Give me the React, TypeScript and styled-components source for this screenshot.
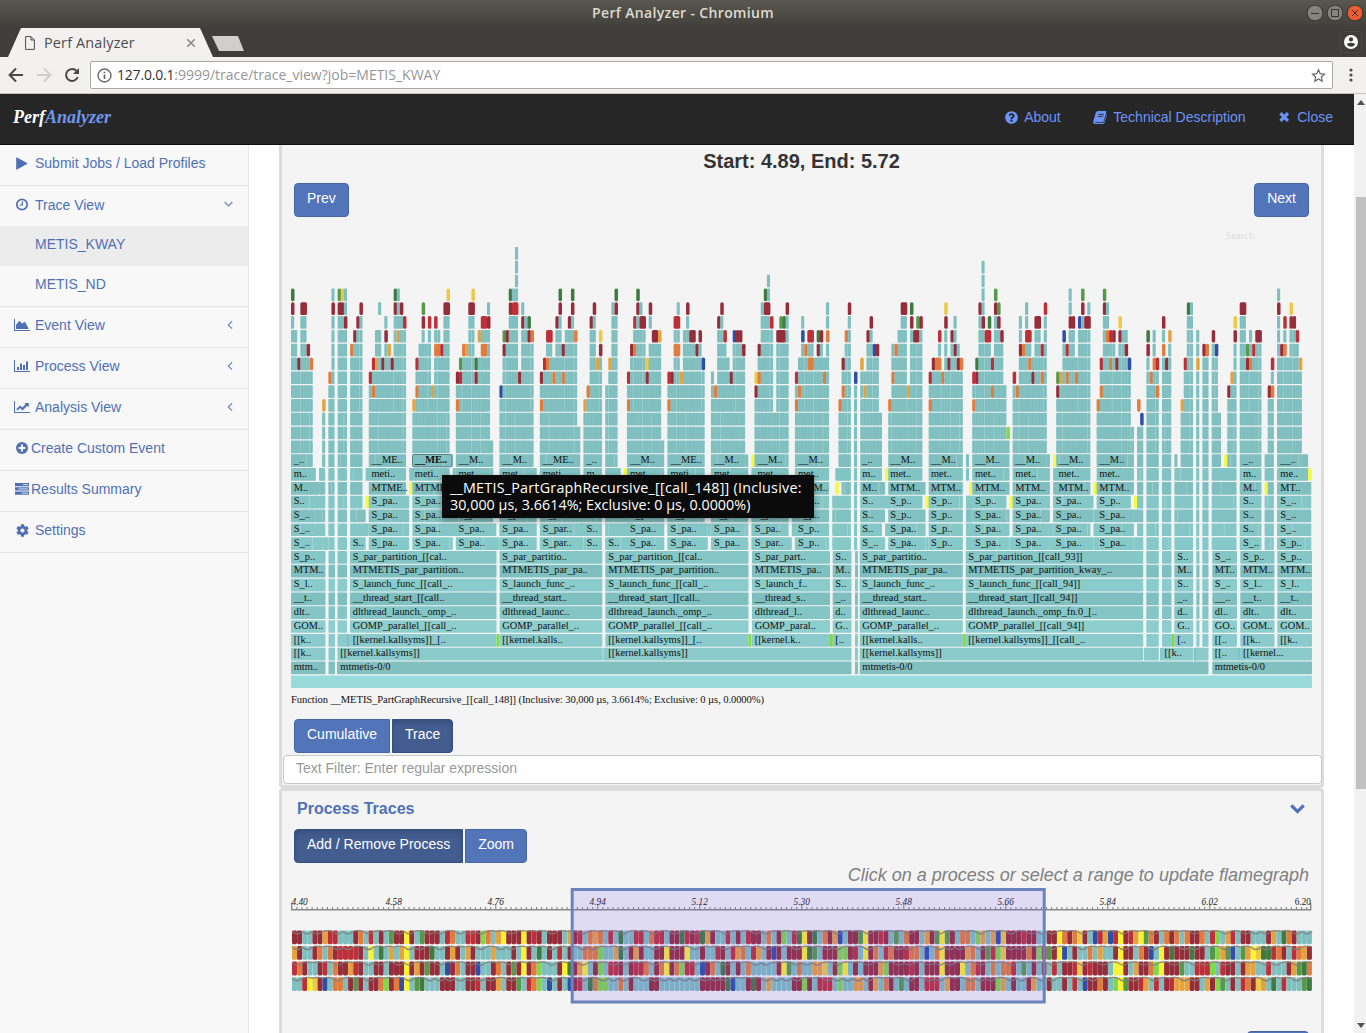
import React from "react";
import styled, { createGlobalStyle, css } from "styled-components";
import { FaQuestionCircle, FaCog } from "react-icons/fa";

const Global = createGlobalStyle`
  * { box-sizing: border-box; }
  html, body { margin: 0; padding: 0; background: #fff; overflow: hidden; }
  body { font: 14px/20px "Liberation Sans", Arial, sans-serif; color: #333; }
`;
const ui = `"Open Sans", "Noto Sans", sans-serif`;

const Window = styled.div`width: 1366px; height: 1033px; overflow: hidden; display: flex; flex-direction: column;`;
const TitleBar = styled.div`
  position: relative; height: 28px; flex: none; display: flex; align-items: center; justify-content: center;
  background: linear-gradient(#5a5750, #403f3a); color: #dfdbd2;
  font: 600 14px/26px ${ui}; letter-spacing: 0.35px; padding-bottom: 2px;
`;
const WindowButtons = styled.div`position: absolute; right: 3px; top: 5px; display: flex; gap: 4px;`;
const TabStrip = styled.div`
  height: 29px; flex: none; background: #3f3e3a; display: flex; justify-content: space-between;
`;
const Tab = styled.div`
  width: 205px; margin-left: 8px; height: 29px; background: #f2f1f0; display: flex; align-items: center; padding: 0 17px;
  clip-path: polygon(13px 0, 192px 0, 205px 100%, 0 100%); color: #4c4c4c; font: 14.4px/28px ${ui};
`;
const TabTitle = styled.span`flex: 1; margin-left: 9px; letter-spacing: 0.17px;`;
const NewTab = styled.div`width: 32px; height: 15px; margin-top: 8px; margin-left: -1px; background: #d0cfcd; clip-path: polygon(0 0, 26px 0, 32px 100%, 7px 100%);`;
const Tabs = styled.div`display: flex; gap: 0;`;
const Profile = styled.div`width: 22px; height: 22px; margin: 3px 4px; border: 1px solid #4a4843; border-radius: 3px; display: grid; place-items: center;`;
const Toolbar = styled.div`
  height: 37px; flex: none; background: #f2f1f0; border-bottom: 1px solid #c4c3c1; display: flex; align-items: center; padding-left: 7px;
`;
const NavIcons = styled.div`display: flex; gap: 10px; width: 83px;`;
const Address = styled.div`
  width: 1243px; height: 28px; border: 1px solid #a9a8a6; border-radius: 2px; background: #fff; display: flex; align-items: center;
  padding: 0 6px; font: 14px/26px ${ui}; color: #969696; b { font-weight: 400; color: #333; letter-spacing: -0.2px; }
`;
const Url = styled.span`flex: 1; margin-left: 5px; letter-spacing: 0;`;
const Dots = styled.div`width: 32px; display: grid; place-items: center; padding-left: 4px;`;

const Viewport = styled.div`flex: 1; display: flex; min-height: 0;`;
const Page = styled.div`width: 1354px; display: flex; flex-direction: column;`;
const Header = styled.header`
  height: 51px; flex: none; background: #262626; border-bottom: 1px solid #101010; display: flex; align-items: center;
  justify-content: space-between; padding: 0 21px 4px 13px; color: #6c93f8;
`;
const Brand = styled.div`font: italic bold 18px/24px "Liberation Serif", serif; color: #6f96ee; span { color: #fff; }`;
const TopLinks = styled.nav`display: flex; gap: 32.6px;`;
const TopLink = styled.a`display: flex; align-items: center; svg { margin-right: 6px; }`;

const Body = styled.div`flex: 1; display: flex; min-height: 0;`;
const Sidebar = styled.aside`width: 249px; background: #f8f8f8; border-right: 1px solid #e7e7e7; color: #5070b4;`;
const MenuItem = styled.div<{ $tight?: boolean; $open?: boolean }>`
  height: ${p => (p.$open ? 40 : 41)}px; border-bottom: ${p => (p.$open ? "0" : "1px solid #e4e4e4")}; display: flex; align-items: center;
  padding: 0 15px ${p => (p.$open ? 3 : 4)}px 14px;
  & > i { width: ${p => (p.$tight ? 17 : 21)}px; flex: none; display: flex; align-items: center; }
  & > span { flex: 1; }
`;
const SubItem = styled.div<{ $active?: boolean; $last?: boolean }>`
  height: ${p => (p.$last ? 41 : 40)}px; padding: 8px 0 0 35px; background: ${p => (p.$active ? "#ececec" : "transparent")};
  border-bottom: ${p => (p.$last ? "1px solid #e4e4e4" : "0")};
`;

const Content = styled.main`padding-left: 30px; width: 1075px; overflow: hidden;`;
const Panel = styled.section<{ $first?: boolean }>`
  background: #f4f4f4; border: 3px solid #dcdcdc; border-radius: ${p => (p.$first ? "0 0 4px 4px" : "4px")};
  ${p => p.$first && css`border-top: 0; height: 643px;`}
  ${p => !p.$first && css`height: 400px;`}
`;
const RangeTitle = styled.h2`margin: 0; height: 38px; padding-top: 4px; text-align: center; font: bold 20px/24px "Liberation Sans", sans-serif;`;
const Spread = styled.div`display: flex; justify-content: space-between; padding: 0 12px;`;
const Button = styled.button<{ $active?: boolean; $side?: "l" | "r" }>`
  height: 34px; min-width: 54px; padding: 0 12px 4px; border: 1px solid ${p => (p.$active ? "#34507f" : "#4766a5")}; color: #fff;
  background: ${p => (p.$active ? "#435d90" : "#5274b8")}; font: 14px/20px "Liberation Sans", Arial, sans-serif; white-space: nowrap;
  border-radius: ${p => (p.$side === "l" ? "4px 0 0 4px" : p.$side === "r" ? "0 4px 4px 0" : "4px")};
  box-shadow: ${p => (p.$active ? "inset 0 3px 5px rgba(0,0,0,.15)" : "none")};
`;
const WideButton = styled(Button)`width: 62px;`;
const ButtonGroup = styled.div`display: flex; gap: 2px; padding-left: 12px;`;
const ChartArea = styled.div`position: relative; height: 502px; padding-left: 9px; svg { display: block; }`;
const Tooltip = styled.div`
  position: absolute; left: 160px; top: 258px; width: 372px; height: 43px; padding: 4px 8px; background: #0b0b0b; color: #fff;
  font: 14.3px/17px ${ui}; white-space: nowrap; box-shadow: 0 2px 6px rgba(0,0,0,.4);
`;
const TipLine = styled.div<{ $spacing: number }>`letter-spacing: ${p => p.$spacing}px;`;
const Filter = styled.input`
  display: block; width: 1039px; height: 29px; margin: 2px 0 0 1px; border: 1px solid #c8c8c8; border-radius: 4px; padding: 0 12px 3px;
  font: 14px "Liberation Sans", Arial, sans-serif; background: #fff; &::placeholder { color: #999; }
`;
const PanelHead = styled.div`
  display: flex; justify-content: space-between; align-items: center; height: 38px; padding: 0 16px 2px 15px;
  font: bold 16px/20px "Liberation Sans", sans-serif; color: #5070b8;
`;
const Hint = styled.div`text-align: right; padding: 2px 12px 0 0; height: 24px; font: italic 18px/20px "Liberation Sans", sans-serif; color: #808080;`;
const TraceArea = styled.div`padding-left: 9px; height: 144px; svg { display: block; }`;
const Scrollbar = styled.div`width: 12px; background: #f1f1f1; display: flex; flex-direction: column; align-items: flex-end; justify-content: space-between;`;
const Thumb = styled.div`width: 10px; height: 592px; background: #c1c1c1; margin: 86px 0 229px;`;
const Arrow = styled.div<{ $up?: boolean }>`
  width: 0; height: 0; margin: ${p => (p.$up ? "6px 0 0" : "0 0 5px")}; margin-right: 1px; border: 4px solid transparent;
  ${p => (p.$up ? "border-bottom-color: #505050; border-top: 0; border-bottom-width: 5px;" : "border-top-color: #505050; border-bottom: 0; border-top-width: 5px;")}
`;

const colors: Record<string, string> = {
  t: "#7fbfbf", m: "#962d3a", r: "#bd3039", g: "#3f7a3f", L: "#57994a", y: "#ecca45", o: "#e07d3e", a: "#e5a340",
  b: "#314da6", n: "#80d84a", v: "#f6f93c",
};

/* Upper flame rows, one string per depth; each block holds a third of the chart, measured in thirds of a pixel. */
const upper: { origin: number; rows: string[] }[] = [
  { origin: 280, rows: [
    "t705-714", "t705-714", "t705-714",
    "g33 t155 L171 y182 t191 g341 t350 y499 y574 g687 t696-714 g836 g874 g1004",
    "m33 m61-80 m155 m173-191 t191 m238 t294 m341 t350 m359 L425 m490-508 m565-583 t621 m687 r696-714 t724 m836 m874 m939 t995 m1004",
    "t33 t61-80 t155 t173-191 m191 m229 t238 t313 t341-368 r368 m425 r443 r462 t490-508 t565-583 r602-621 m621 t687-714 m724 t733 g743 m827 t836 m864 t873 m930 t939 t995-1013",
    "t33-51 t61-80 t155 t173-200 m219 t229-247 t285-303 m313 t341 a350 t359-378 t425 t443 t462-480 t490-508 t565-583 a593 t602-630 L668 m677 t687-714 t724-743 m743 o752 r799-817 t827-845 t855-883 o883 t930-948 y958 t995-1013",
    "t33-51 t61-80 m80 t155 t173-200 o210 t219-247 t285-303 t313 a322 t341-378 t415-453 o462-480 r480 t490-508 o546 a555 t565-583 o602-621 t621 m668 t677-714 t724-761 t799-817 t827-845 m845 t855-892 t930-948 m958 t995-1013",
    "t33-51 m51 t61-89 o89 t155 t173-200 t210-247 r276 a285 t294 m303 t313-331 m331 t341-378 r406 t415-453 t462-508 L537 t546-583 g583 t593-630 t668-714 t724-761 r789 o799 t808-892 t930-948 a948 t958 a986 t995-1013",
    "t33-99 o146 t155 t173-200 t210-247 r266 t276-378 t406-453 t462-508 m528-537 r537-546 t546-583 m583 t593-630 t668-714 m714 t724-761 m780 t789-817 o817 t827-845 o845 t855-892 t930-967 t986-1013",
    "t33-99 t146-164 t173-200 t210-247 t266-276 o276 t285-378 o406 t415-453 a453 t462-508 t528-630 b659 t668-761 t780-892 o920 t930-967 t976-1013",
    "t33-99 a127 t146-164 t173-200 t210-247 t266-378 a397 t406-508 o528 t537-630 t659-761 o780 t789-892 a911 t920-967 t976-1013",
    "t33-99 t127 t146-164 t173-200 t210-247 t266-378 t397-508 t528-630 t659-761 t780-892 t911-967 t976-1013",
    "t33-99 t127 t146-164 t173-200 t210-247 t266-378 t397-508 t528-630 t659-761 t780-901 t911-967 t976-1013",
    "t33-99 t127 t146-164 t173-200 t210-247 t266-378 t397-508 t528-640 t659-761 t780-901 t911-967 t976-1013",
    "t33-99 t127 t146-164 t173-200 t210-247 t266-378 t397-516 t528-640 t659-761 t780-901 t911-967 t976-1013",
    "t33-108 t117-136 t146-164 t173-200 t210-247 t257-378 t388-509 t518-640 t659-770 t780-901 t911-967 t976-1022 v1032",
    "t33-115 t117-136 t146-164 t173-200 t210-247 t266-378 v388 t397-518 t528-640 t659-770 t780-901 t911-967 t976-1060",
    "t33-120 t120-136 t146-164 t173-200 t210-250 v257 t266-388 t397-518 t518-640 t659-775 t775-967 t976-1060",
    "t33-108 t108-136 t146-164 t173-200 t210-257 t266-388 t393-640 t659-770 t780-967 t976-1060",
    "t33-117 t117-136 t146-164 t173-200 t210-266 t266-388 t393-649 t659-770 t775-901 t905-967 t976-1060",
    "t33-122 t122-136 t146-164 t173-200 t210-257 t266-388 t397-518 t523-649 t659-775 t775-910 t910-967 t976-1060",
  ] },
  { origin: 620, rows: [
    "", "", "t443", "g50 g433 t443",
    "m50 t59 m87 t171 m199 m302 t424 m433-452 m498 t620 m685 m841-860 g869 y972",
    "r40 t50 m59-78 t87 r162-180 t199 m293 t302 t424-452 r452 L480 g489 t498 t545 t620 t685 m747 t841-860 m869 L888 m897 m972 t1000",
    "t40-78 m96-115 a115 t162-180 t190-208 m208-227 m236 t293-311 r311 b339 m348-357 m357-367 t424-461 m471-498 t498 b545 r564-582 g592 m601 o620 o676 t685 m738 t747 t832-860 t869 m878-897 t897 r953 t972 m990 t1000",
    "m31 o40 t49-78 t87-125 o162-180 t190-227 m227 t236 t293-320 t339-367 m367 m414 t424-461 t471-508 t545 o554 t564-582 m592 t601 t620 t676-694 t738-757 b757 m766 t813 o822 t832-860 t869-906 t953 t972 t990 m1000 t1009",
    "t31-78 y78 t87-125 t162-180 t190-246 b246 t293-330 t339-376 t414-461 t471-508 t536-564 o564-582 t582-629 m667 t676-694 a719 t738-775 t813-860 t869-906 m934 o943-962 t972 m981 t990-1009 m1009 o1018",
    "r22 t31-78 m78 t87-125 r144-153 m153-162 t162-180 a180 t190-255 t274 t293-330 m330 t339-376 y405 o415 t424-461 t471-508 r526 t536-610 o610 t620 t667-694 b705 t719-775 o813 t822-860 t869-906 r925 t934-962 o962 t972-1028",
    "t22-125 t144-255 t274 o283 t293-376 m405 t414-461 t471-508 t526 o536 t545-629 o667 t676-694 t705 t719 a729 t738-775 t813-860 a860 t869-906 t925-1028",
    "o22 t31-125 o144 t153-255 t274-376 t405-461 t471-508 o526 t536-629 o657 t667-694 t705 t719-775 o804 t813-906 o925 t934-1028",
    "t22-125 t144-255 t274-376 t405-508 t526-629 t657-694 t705 t719-785 t804-906 t925-1028",
    "t22-125 t144-255 t274-376 t405-508 t526-629 t657-694 t705 t719-785 t804-906 t925-1028",
    "t22-134 t144-255 t274-376 t405-508 t526-629 t657-694 t705 t719-785 t804-906 t925-1028",
    "t22-134 t144-255 t274-376 t376 v396 t405-508 t526-629 t657-694 t705 t719-785 t804-906 t925-1028 t1037",
    "t22-134 t144-255 t274-385 t396-508 t526-629 t647-694 t705 t719-785 v794 t804-906 t925-1028 t1037",
    "t22-134 t144-255 t274-385 t396-508 t526-629 v647 t663-694 t705 t719-791 t804-915 t925-1028",
    "t22-134 t144-255 t274-385 t396-508 t526-629 t638-694 t705 t719-906 v915 t925-1028 t1037-1060",
    "t22-134 t144-255 t274-385 t396-508 t517-629 t638-694 t705 t719-794 t804-915 t925-1028 t1037-1060",
    "t22-134 t144-265 t265-385 t396-508 t517-629 t638-694 t705 t719-785 t794-915 t925-1028 t1037-1060",
    "t22-134 t144-265 t274-385 t396-518 t527-629 t638-694 t705 t719-794 t804-915 t915-1028 t1037-1060",
  ] },
  { origin: 960, rows: [
    "", "t64", "t64", "t64 L101 t325 L363 L428 t952",
    "m54 t64 m101 L110 t194 r250 t325 m363 t381 m428 t437 g681 t690 m841-860 m952 y990",
    "t54 m64 g82 t101 m110 t175 t194 m222-241 t250 m325 m335 b353 t363 m372-391 t428-447 y474 m606 t681-699 y822 t841-860 t952 r971 m990 m999",
    "t54-73 r73-91 t101-119 m119 t175 r194-213 t222-241 t250 b307 t325-344 t353-391 t428 o437 r447 m456 m474 t484-502 g559 t578 t606 a625 t681-699 t709 m757 m822 t841-860 t869 m888-906 t952 t971 t990-1009 r1009",
    "t54-91 t101-129 m175 o185 t194-213 t222-241 r241 t250 t307 r316 t325-344 t353-391 t428-465 t474-493 m493 m559 t578 o606 t625 t681-699 t709 m727 o736 t757 b766 t822 t841-860 L860 t869 r878 t888-906 t952 m962 o971 t990-1018",
    "g45 t54-91 r91 t101-129 t175-204 o204 t213-260 t307-391 r418 t428-447 o447 t456 m465 t474-502 b502 t559 o578 r587 t606 m615 t625 r671 t681-699 a709 t727-745 t757-775 t822 t841-860 m860 o869 t878-906 r934 t952-1018 a1018",
    "r36 m45 t54-129 r157 t175-213 m213 t222-241 o241 t250 L288 a297 t307 o316 t325-344 o344 t353-391 t418-512 t559 o568 t578-596 t606-634 t671-699 t709 t727-745 t757-775 a813 t822 t841-906 t934 t952-1028",
    "t36-91 o91 t101-138 t157 o166 t175-260 m288 t297-391 o418 t428-512 t559-587 o587 t606-634 t671-699 t709 t727-745 t757-775 m804 t813-831 t841-906 m925 o934 t952-1028",
    "o36 t45-138 t157-260 t288-391 o409 t418-512 o531 t559-596 t606-634 a662 t671-699 t709 t727-745 t757-775 t804-831 t841-906 t925-943 t952-1028",
    "t36-138 t157-260 t288-391 t409-512 b540 t559-596 t606-634 t662-699 t709 t727-745 t757-785 t804-831 t841-906 t925-943 t952-1028",
    "t36-138 n138 t157-260 t288-391 t409-521 t531-549 t559-596 t606-634 t662-699 t709 t727-745 t757-785 t804-831 t841-906 t925-943 t952-1028",
    "t36-147 t157-260 t288-391 t409-521 t531-549 t559-596 t606-634 t662-699 t709 t727-745 t757-785 t804-831 t841-906 t925-943 t952-1028",
    "t36-147 t157-260 t260 v279 t288-391 t409-521 t531-549 t559-596 t606-634 t643 t662-699 t709 t727-745 t757-785 v794 t804-831 t841-906 t915-943 t952-1028 t1028-1046",
    "t36-147 t157-269 t279-391 t409-521 t531-549 t559-596 t606-634 t643-662 t662-699 t709 t727-745 t757-785 t785-831 t841-906 t915-943 t952-1046 v1046",
    "v26 t36-147 t157-269 t279-391 v400 t409-521 t531-549 t559-596 t606-634 t643-699 t709 t727-745 t757-831 t841-906 v915 t925-943 t952-1056",
    "t17-138 v147 t157-269 t279-400 t409-512 v521 t531-549 t559-596 t606-634 t643-699 t709 t727-745 t757-831 t841-906 t915-943 t952-1056",
    "t17-147 t157-269 t279-400 t400-521 t521-549 t559-596 t606-634 t643-699 t709 t727-745 t757-831 t841-910 t915-943 t952-1056",
    "t17-147 t157-265 t269-391 t400-521 t531-549 t559-596 t606-634 t643-699 t709 t727-745 t757-831 t841-910 t915-943 t952-1056",
    "t17-147 t147-265 t269-396 t400-549 t559-596 t606-634 t643-699 t709 t727-745 t757-831 t841-910 t915-943 t952-1056",
  ] },
];

/* Call-stack rows under the partition frames, in page pixels. */
const stack = "291-325.5 328.5-335 337.5-347 350-496.5 499.7-602.3 605.3-748.5 752-830 832.7-851.5 855-858 859.7-962.8 965.7-1143.2 1146.3-1158.8 1162-1171.5 1174.3-1193.2 1196.3-1199.5 1202.3-1208.5 1212.3-1237 1240.3-1274.5 1277.3-1312";
const lower: { fill: string; spans: string }[] = [
  { fill: "#85c7c7", spans: stack }, { fill: "#7fbfbf", spans: stack }, { fill: "#8acbcb", spans: stack },
  { fill: "#7fbfbf", spans: stack }, { fill: "#84c5c5", spans: stack }, { fill: "#8ccece", spans: stack },
  { fill: "#8bcbce", spans: stack.replace("337.5-347", "337.5-350") },
  { fill: "#8acacb", spans: "291-325.5 328.5-335 337.5-602.7 603.2-851.5 855-858 859.7-1143.2 1144-1158.8 1160-1193.5 1194-1208.5 1212.3-1238.2 1239-1312" },
  { fill: "#82bfbf", spans: "291-325.5 328.5-335 337-851.5 855-858 859.7-1208.5 1212.3-1312" },
  { fill: "#99dadb", spans: "291-1312" },
];
const rowFill = ["#7fbfbf", "#82c3c3", "#7fbfbf", "#85c7c7", "#82c1c1", "#85c7c7", "#86c9c9"];

const labels: Record<number, [number, string][]> = {
  15: [[293.7, "_.."], [371.5, "__ME.."], [414.8, "__ME.."], [458.5, "__M.."], [502.3, "__M.."], [542.7, "__ME.."], [586.5, "_.."], [630, "__M.."], [670.5, "__ME.."], [714, "__M.."], [757.5, "__M.."], [798, "__M.."], [862.3, "_.."], [890.3, "__M.."], [931, "__M.."], [975, "__M.."], [1015.3, "__M.."], [1058.5, "__M.."], [1099.3, "__M.."], [1243, "_.."], [1280.3, "__.."]],
  16: [[293.7, "m.."], [371.5, "meti.."], [414.8, "meti.."], [458.5, "met.."], [502.3, "met.."], [542.7, "meti.."], [586.5, "m.."], [630, "met.."], [670.5, "meti.."], [714, "met.."], [757.5, "met.."], [798, "met.."], [862.3, "m.."], [890.3, "met.."], [931, "met.."], [975, "met.."], [1015.3, "met.."], [1058.5, "met.."], [1099.3, "met.."], [1243, "m.."], [1280.3, "me.."]],
  17: [[293.7, "M.."], [371.5, "MTME.."], [414.8, "MTME.."], [798, "MTM.."], [862.3, "M.."], [890.3, "MTM.."], [931, "MTM.."], [975, "MTM.."], [1015.3, "MTM.."], [1058.5, "MTM.."], [1099.3, "MTM.."], [1243, "M.."], [1280.3, "MT.."]],
  18: [[293.7, "S.."], [371.5, "S_pa.."], [414.8, "S_pa.."], [798, "S_p.."], [862.3, "S.."], [890.3, "S_p.."], [931, "S_p.."], [975, "S_p.."], [1015.3, "S_pa.."], [1055.7, "S_pa.."], [1099.3, "S_p.."], [1243, "S.."], [1280.3, "S_.."]],
  19: [[293.7, "S_.."], [371.5, "S_pa.."], [414.8, "S_pa.."], [458.5, "S_pa.."], [502.3, "S_pa.."], [542.7, "S_par.."], [586.5, "S.."], [630, "S_pa.."], [670.5, "S_pa.."], [714, "S_pa.."], [754.7, "S_pa.."], [798, "S_p.."], [862.3, "S.."], [890.3, "S_p.."], [931, "S_p.."], [975, "S_pa.."], [1015.3, "S_pa.."], [1055.7, "S_pa.."], [1099.3, "S_pa.."], [1243, "S.."], [1280.3, "S_.."]],
  20: [[293.7, "S_.."], [371.5, "S_pa.."], [414.8, "S_pa.."], [458.5, "S_pa.."], [502.3, "S_pa.."], [542.7, "S_par.."], [586.5, "S.."], [630, "S_pa.."], [670.5, "S_pa.."], [714, "S_pa.."], [754.7, "S_pa.."], [798, "S_p.."], [862.3, "S.."], [890.3, "S_pa.."], [931, "S_p.."], [975, "S_pa.."], [1015.3, "S_pa.."], [1055.7, "S_pa.."], [1099.3, "S_pa.."], [1243, "S.."], [1280.3, "S_.."]],
  21: [[293.7, "S_.."], [352.7, "S.."], [371.5, "S_pa.."], [414.8, "S_pa.."], [458.5, "S_pa.."], [502.3, "S_pa.."], [542.7, "S_par.."], [586.5, "S.."], [608.3, "S.."], [630, "S_pa.."], [670.5, "S_pa.."], [714, "S_pa.."], [754.7, "S_par.."], [798, "S_p.."], [862.3, "S_.."], [890.3, "S_pa.."], [931, "S_p.."], [975, "S_pa.."], [1015.3, "S_pa.."], [1055.7, "S_pa.."], [1099.3, "S_pa.."], [1243, "S_.."], [1280.3, "S_p.."]],
};
const stackX = [293.7, 352.7, 502.3, 608.3, 754.7, 835.3, 862.3, 968.3, 1177.3, 1214.8, 1243, 1280.3];
const stackText = [
  "S_p..|S_par_partition_[[cal..|S_par_partitio..|S_par_partition_[[cal..|S_par_part..|S..|S_par_partitio..|S_par_partition_[[call_93]]|S..|S_..|S_p..|S_p..",
  "MTM..|MTMETIS_par_partition..|MTMETIS_par_pa..|MTMETIS_par_partition..|MTMETIS_pa..|M..|MTMETIS_par_pa..|MTMETIS_par_partition_kway_..|M..|MT..|MTM..|MTM..",
  "S_l..|S_launch_func_[[call_..|S_launch_func_..|S_launch_func_[[call_..|S_launch_f..|S..|S_launch_func_..|S_launch_func_[[call_94]]|S..|S_..|S_l..|S_l..",
  "__t..|__thread_start_[[call..|__thread_start..|__thread_start_[[call..|__thread_s..|_..|__thread_start..|__thread_start_[[call_94]]|_..|__..|__t..|__t..",
  "dlt..|dlthread_launch._omp_..|dlthread_launc..|dlthread_launch._omp_..|dlthread_l..|d..|dlthread_launc..|dlthread_launch._omp_fn.0_[..|d..|dl..|dlt..|dlt..",
  "GOM..|GOMP_parallel_[[call_..|GOMP_parallel_..|GOMP_parallel_[[call_..|GOMP_paral..|G..|GOMP_parallel_..|GOMP_parallel_[[call_94]]|G..|GO..|GOM..|GOM..",
  "[[k..|[[kernel.kallsyms]]_[..|[[kernel.kalls..|[[kernel.kallsyms]]_[..|[[kernel.k..|[..|[[kernel.kalls..|[[kernel.kallsyms]]_[[call_..|[..|[[..|[[k..|[[k..",
];
stackText.forEach((line, i) => { labels[22 + i] = line.split("|").map((s, j) => [stackX[j], s]); });
labels[29] = [[293.7, "[[k.."], [340.3, "[[kernel.kallsyms]]"], [608.3, "[[kernel.kallsyms]]"], [862.3, "[[kernel.kallsyms]]"], [1164.5, "[[k.."], [1214.8, "[[.."], [1243, "[[kernel..."]];
labels[30] = [[293.7, "mtm.."], [340.3, "mtmetis-0/0"], [862.3, "mtmetis-0/0"], [1214.8, "mtmetis-0/0"]];

const LEFT = 291, CELL = 3.1105, TOP = 30, PITCH = 13.82, H = 12.7;
const rowY = (i: number) => TOP + i * PITCH;

function FlameChart() {
  const frames: React.ReactNode[] = [];
  upper.forEach(({ origin, rows }, s) => rows.forEach((row, i) => row.split(" ").filter(Boolean).forEach((tok, j) => {
    const kind = tok[0];
    const [a, b] = tok.slice(1).split("-").map(Number);
    const start = Math.round((origin + a / 3 - LEFT) / CELL);
    const count = b ? Math.max(1, Math.round((b - a) / 3 / CELL)) : 1;
    const x = start * CELL, w = count * CELL;
    const fill = kind === "t" && i >= 15 ? rowFill[i - 15] : colors[kind];
    frames.push(<rect key={`${s}-${i}-${j}`} x={x} y={rowY(i)} width={w + (kind === "t" ? 0 : 0.4)} height={H} rx={kind === "t" ? 0.8 : 1.6} fill={fill} />);
    if (kind === "t") for (let k = 1; k < count; k++) {
      const strong = ((start + k) * 7 + (i > 14 ? i * 5 : Math.floor(i / 6))) % 11 < (i > 14 ? 1 : 2);
      if (i < 15 || strong) frames.push(<rect key={`${s}-${i}-${j}-${k}`} x={x + k * CELL - 0.3} y={rowY(i)} width={0.6} height={H} fill="#fff" opacity={strong ? 0.36 : 0.1} />);
    }
  })));
  lower.forEach(({ fill, spans }, i) => spans.split(" ").forEach((sp, j) => {
    const [a, b] = sp.split("-").map(Number);
    frames.push(<rect key={`l${i}-${j}`} x={a - LEFT} y={rowY(22 + i)} width={b - a} height={H} rx={0.8} fill={fill} />);
  }));
  return (
    <svg width="1024" height="502" fontFamily="'Liberation Serif', serif" fontSize="10.4" fill="#111">
      {frames}
      {[496.5, 748.5, 829.8, 962.8, 1171.3].map(x => <rect key={x} x={x - LEFT} y={rowY(28)} width="3" height={H} rx="1" fill="#80dc40" />)}
      {[347, 1194, 1238].map(x => <rect key={x} x={x - LEFT} y={rowY(x === 347 ? 28 : 29)} width="1.6" height={H} fill="#7fbfbf" />)}
      <rect x="121.5" y={rowY(15) + 0.2} width="39.5" height={H - 0.4} rx="1.5" fill="none" stroke="#5b8485" strokeWidth="1" />
      {Object.entries(labels).map(([row, items]) => items.map(([x, s], j) => (
        <text key={`${row}-${j}`} x={x - LEFT} y={Math.floor(rowY(+row) + 9.1)} fontWeight={row === "15" && j === 2 ? 700 : 400}>{s}</text>
      )))}
      <text x="934.5" y="22" fontSize="10.6" fill="#dedede">Search</text>
      <text x="0" y="486" fontSize="10.6" textLength="473" lengthAdjust="spacing">Function __METIS_PartGraphRecursive_[[call_148]] (Inclusive: 30,000 µs, 3.6614%; Exclusive: 0 µs, 0.0000%)</text>
    </svg>
  );
}

/* Two hundred samples per process, ten to a group. */
const traces = [
  "mmttmmarrt ttmotrtmtL mmymtLmmmt rottrrmnot aymmmymrmt mmmtamrtoa otrtgttrrt orrtmmgrmr gamttrtmtr mmtotmntrg ymgtomabtm mLymmrmtLt ommtamLyLm tootnataby mmmrmmttmm yomoymtbra brymrayLom tomotommot rntartmmtt tmatgomttt",
  "amttmotomr rrrmtytgta taytmmmgtt mamtamttta tttmtymtgt mtrtmttooo nttagtmamt tmmymmmytt mttrmtraot ratmbmtmmm ygLtmmmnnm rtymotromm rootbtoymm mmaotmLrny mmmmomnmLm ybtmttotat tmymmtombt ymgmmmgmmt LnaLbtLayy ggromtroam",
  "romttmrtom marmttmmtm mmymamLmmt bmotmmbttm otmLmymont ttmygmaytm ntrrmtmrro tmoymonrrt bmotgmtmto tttttmyLto ttaaytmnyt mtmmmanmmm mrmtmmmymm mytormtoto ortLtmtmtr tmmrymrmmm tyymtammon ymmmLttrrr ntrmmtmaat trtttmaLgo",
  "ttryymbtoo tmLmtmmonm obytLgtttm mmttmmrtmm atmmLtront btmtbmrtgo nnttotmttt mmtttttttt mmmmmgbttm gmtattttmm nmtrrrtntt aatmatomtL tmmtrrrtam mtootmmmna tmttmattmt tmtrtbmmom tnyLmmratr tmraaammta mnLtmtromy atgtrtttLg",
].map(s => s.replace(/ /g, ""));

function TraceChart() {
  const step = 5.1;
  return (
    <svg width="1024" height="144" fontFamily="'Liberation Serif', serif" fontSize="9.3" fill="#222">
      <path d="M0.7 16V22.7H1019.7V16" fill="none" stroke="#888" strokeWidth="1.4" />
      {Array.from({ length: 199 }, (_, i) => i + 1).map(i => (
        <rect key={i} x={0.7 + i * step - 0.5} y={i % 20 ? 20 : 17} width={1.1} height={i % 20 ? 2.6 : 5.5} fill="#888" />
      ))}
      {["4.40", "4.58", "4.76", "4.94", "5.12", "5.30", "5.48", "5.66", "5.84", "6.02", "6.20"].map((s, i) => (
        <text key={s} x={i === 0 ? 0.5 : i === 10 ? 1020 : 0.7 + i * 102} y="18" fontStyle={i === 10 ? "normal" : "italic"}
          textAnchor={i === 0 ? "start" : i === 10 ? "end" : "middle"}>{s}</text>
      ))}
      {traces.map((line, r) => {
        const y = 43.4 + r * 15.6;
        let wave = `M1 ${y + 1}`;
        for (let i = 0; i < line.length; i += 2) {
          const dip = line[i] === line[i + 1] || i % 7 < 2 ? 5 : -1.6;
          wave += `q${step} ${dip} ${step * 2} 0`;
        }
        return (
          <g key={r}>
            {line.split("").map((c, i) => <rect key={i} x={1 + i * step} y={y} width={5} height={13.8} rx={1.4} fill={c === "y" && (i % 5 < 4) ? "#fcf32c" : colors[c]} />)}
            <path d={wave} fill="none" stroke="#817d79" strokeWidth="1.3" opacity=".9" />
          </g>
        );
      })}
      <rect x="281.2" y="2.5" width="472" height="112.5" fill="#6f4fff" fillOpacity=".15" stroke="#6b83bd" strokeWidth="3" />
    </svg>
  );
}

const Chevron = ({ open }: { open?: boolean }) => (
  <svg width="9" height="9" viewBox="0 0 9 9" fill="none" stroke="#6c86bf" strokeWidth="1.2">
    <path d={open ? "M0.7 2L4.5 5.8L8.3 2" : "M8 0.3L4.3 4L8 7.7"} />
  </svg>
);
const ChartIcon = ({ children }: { children: React.ReactNode }) => (
  <svg width="16" height="12" viewBox="0 0 16 12" fill="#5070b4"><path d="M0 0H1V11H16V12H0Z" />{children}</svg>
);

export default function App() {
  return (
    <Window>
      <Global />
      <TitleBar>
        Perf Analyzer - Chromium
        <WindowButtons>
          {[0, 1, 2].map(i => (
            <svg key={i} width="16" height="16" viewBox="0 0 16 16" fill="none" stroke="#35332f" strokeWidth="1">
              <circle cx="8" cy="8" r="7.9" fill={i === 2 ? "#ec5c33" : "#85837c"} />
              {i === 0 && <path d="M4 8.5H12" />}{i === 1 && <path d="M4.5 4.5H11.5V11.5H4.5Z" />}{i === 2 && <path d="M5 5L11 11M11 5L5 11" />}
            </svg>
          ))}
        </WindowButtons>
      </TitleBar>
      <TabStrip>
        <Tabs>
          <Tab>
            <svg width="10" height="14" viewBox="0 0 10 14" fill="none" stroke="#4c4c4c"><path d="M.6.6H6L9.4 4V13.4H.6ZM6 .6V4H9.4" /></svg>
            <TabTitle>Perf Analyzer</TabTitle>
            <svg width="10" height="10" viewBox="0 0 10 10" stroke="#8a8a8a" strokeWidth="1.6"><path d="M1.2 1.2L8.8 8.8M8.8 1.2L1.2 8.8" /></svg>
          </Tab>
          <NewTab />
        </Tabs>
        <Profile>
          <svg width="14" height="14" viewBox="0 0 14 14"><circle cx="7" cy="7" r="7" fill="#fff" /><circle cx="7" cy="4.4" r="2.1" fill="#3b3a37" /><path d="M3 9.5Q3 7.8 7 7.8T11 9.5Q9.7 11.7 7 11.7T3 9.5Z" fill="#3b3a37" /></svg>
        </Profile>
      </TabStrip>
      <Toolbar>
        <NavIcons>
          <svg width="18" height="18" viewBox="0 0 18 18" fill="none" stroke="#4a4a4a" strokeWidth="2"><path d="M9 2.5L2.6 9L9 15.5M3 9H16" /></svg>
          <svg width="18" height="18" viewBox="0 0 18 18" fill="none" stroke="#cfcecd" strokeWidth="2"><path d="M9 2.5L15.4 9L9 15.5M15 9H2" /></svg>
          <svg width="18" height="18" viewBox="0 0 18 18" fill="none" stroke="#4a4a4a" strokeWidth="2"><path d="M14.7 11A6 6 0 1 1 13.6 5" /><path d="M16 2V8H10Z" fill="#4a4a4a" stroke="none" /></svg>
        </NavIcons>
        <Address>
          <svg width="15" height="15" viewBox="0 0 15 15" fill="none" stroke="#6a6a6a" strokeWidth="1.4"><circle cx="7.5" cy="7.5" r="6.5" /><path d="M7.5 6.5V11M7.5 3.8V5.2" strokeWidth="1.7" /></svg>
          <Url><b>127.0.0.1</b>:9999/trace/trace_view?job=METIS_KWAY</Url>
          <svg width="15" height="15" viewBox="0 0 15 15" fill="none" stroke="#666" strokeWidth="1.2"><path d="M7.5 1.8L9.2 5.7L13.5 6.1L10.3 9L11.2 13.2L7.5 11L3.8 13.2L4.7 9L1.5 6.1L5.8 5.7Z" /></svg>
        </Address>
        <Dots><svg width="4" height="14" viewBox="0 0 4 14" fill="#4a4a4a"><circle cx="2" cy="2" r="1.6" /><circle cx="2" cy="7" r="1.6" /><circle cx="2" cy="12" r="1.6" /></svg></Dots>
      </Toolbar>
      <Viewport>
        <Page>
          <Header>
            <Brand><span>Perf</span>Analyzer</Brand>
            <TopLinks>
              <TopLink><FaQuestionCircle size={13} />About</TopLink>
              <TopLink>
                <svg width="14" height="13" viewBox="0 0 14 13"><path d="M5 0H12.6Q13.6.2 13.3 1.3L10.8 10Q10.4 11 9.4 11H2.6Q1.8 11.2 2 11.7H10Q11 11.5 11.4 10.5L13.6 3Q14 3.6 13.8 4.2L11.6 11.8Q11.2 12.9 10.1 12.9H2.2Q-.2 12.8.2 10.7L2.7 2Q3.4.1 5 0Z" fill="#6c93f8" /><path d="M5.3 3.4H10.8M4.7 5.4H10.2" stroke="#262626" strokeWidth=".9" /></svg>
                Technical Description
              </TopLink>
              <TopLink><svg width="13" height="12" viewBox="0 0 13 12" stroke="#6c93f8" strokeWidth="3.2"><path d="M2.4 2.2L10 9.8M10 2.2L2.4 9.8" /></svg>Close</TopLink>
            </TopLinks>
          </Header>
          <Body>
            <Sidebar>
              <MenuItem><i><svg width="16" height="13" viewBox="0 0 16 13"><path d="M2.2 .8Q2.2 .1 3 .4L13 6Q13.6 6.5 13 7L3 12.6Q2.2 12.9 2.2 12.2Z" fill="#5070b4" /></svg></i><span>Submit Jobs / Load Profiles</span></MenuItem>
              <MenuItem $open><i><svg width="16" height="13" viewBox="0 0 16 13" fill="none" stroke="#5070b4" strokeWidth="1.7"><circle cx="8" cy="6.5" r="5.2" /><path d="M8.4 3.3V7H5.5" strokeWidth="1.2" /></svg></i><span>Trace View</span><Chevron open /></MenuItem>
              <SubItem $active>METIS_KWAY</SubItem>
              <SubItem $last>METIS_ND</SubItem>
              <MenuItem><i><ChartIcon><path d="M2 10V6L5.3 1.8L8 4.5L11 2.7L14.8 10Z" /></ChartIcon></i><span>Event View</span><Chevron /></MenuItem>
              <MenuItem><i><ChartIcon><path d="M3 7H5V10H3ZM6 3.5H8V10H6ZM9 5H11V10H9ZM12 1.5H14V10H12Z" /></ChartIcon></i><span>Process View</span><Chevron /></MenuItem>
              <MenuItem><i><ChartIcon><path d="M2.2 8.2L6 4.4L8.4 6.5L11.6 3.2L10.4 2H14.8V6.2L13.3 4.8L8.5 9.4L6 7.1L3.6 9.5Z" /></ChartIcon></i><span>Analysis View</span><Chevron /></MenuItem>
              <MenuItem $tight><i><svg width="16" height="12" viewBox="0 0 16 12"><circle cx="8" cy="6" r="6" fill="#5070b4" /><path d="M8 2.6V9.4M4.6 6H11.4" stroke="#f8f8f8" strokeWidth="2" /></svg></i><span>Create Custom Event</span></MenuItem>
              <MenuItem $tight><i><svg width="16" height="12" viewBox="0 0 16 12"><path d="M1 0H15V3.2H1ZM1 4.3H15V7.5H1ZM1 8.6H15V11.8H1Z" fill="#5070b4" /><path d="M9 1.6H14M4.5 5.9H14M7.5 10.2H14" stroke="#f8f8f8" strokeWidth=".8" /></svg></i><span>Results Summary</span></MenuItem>
              <MenuItem><i><svg width="1.5" height="2" /><FaCog size={13} /></i><span>Settings</span></MenuItem>
            </Sidebar>
            <Content>
              <Panel $first>
                <RangeTitle>Start: 4.89, End: 5.72</RangeTitle>
                <Spread><Button>Prev</Button><Button>Next</Button></Spread>
                <ChartArea>
                  <FlameChart />
                  <Tooltip>
                    <TipLine $spacing={0.24}>__METIS_PartGraphRecursive_[[call_148]] (Inclusive:</TipLine>
                    <TipLine $spacing={0.04}>30,000 µs, 3.6614%; Exclusive: 0 µs, 0.0000%)</TipLine>
                  </Tooltip>
                </ChartArea>
                <ButtonGroup><Button $side="l">Cumulative</Button><Button $side="r" $active>Trace</Button></ButtonGroup>
                <Filter placeholder="Text Filter: Enter regular expression" />
              </Panel>
              <Panel>
                <PanelHead>Process Traces
                  <svg width="15" height="10" viewBox="0 0 15 10" fill="none" stroke="#5070b8" strokeWidth="3.2"><path d="M1.3 1.4L7.5 7.6L13.7 1.4" /></svg>
                </PanelHead>
                <ButtonGroup><Button $side="l" $active>Add / Remove Process</Button><Button $side="r">Zoom</Button></ButtonGroup>
                <Hint>Click on a process or select a range to update flamegraph</Hint>
                <TraceArea><TraceChart /></TraceArea>
                <Spread><span /><WideButton /></Spread>
              </Panel>
            </Content>
          </Body>
        </Page>
        <Scrollbar><Arrow $up /><Thumb /><Arrow /></Scrollbar>
      </Viewport>
    </Window>
  );
}
